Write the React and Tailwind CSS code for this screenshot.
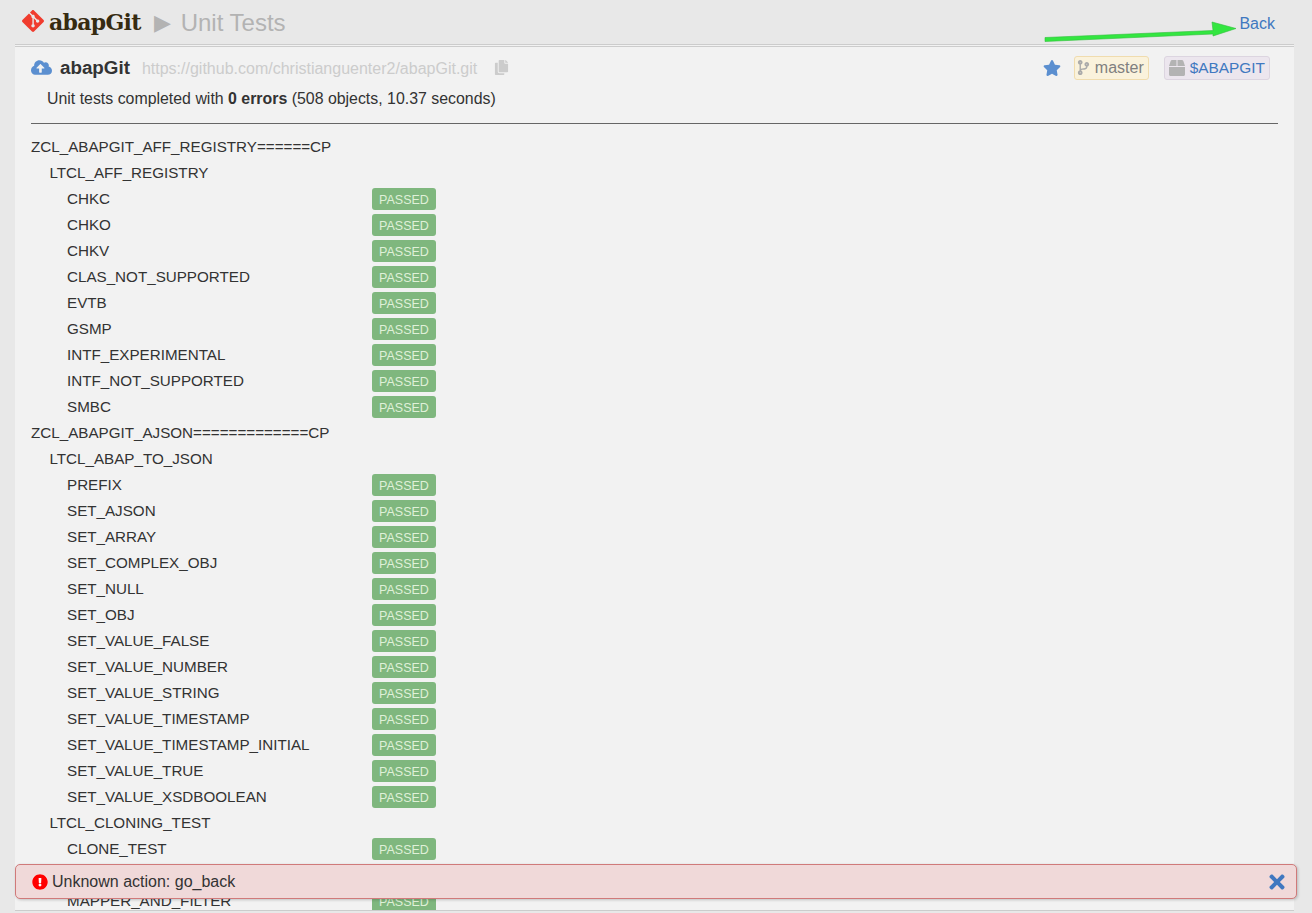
import React from 'react';
import { FaCloudUploadAlt, FaCopy, FaStar, FaCodeBranch, FaBox, FaTimes, FaExclamationCircle } from 'react-icons/fa';
import { SiGit } from 'react-icons/si';

const groups = [
  { name: 'ZCL_ABAPGIT_AFF_REGISTRY======CP', classes: [
    { name: 'LTCL_AFF_REGISTRY', tests: ['CHKC', 'CHKO', 'CHKV', 'CLAS_NOT_SUPPORTED', 'EVTB', 'GSMP', 'INTF_EXPERIMENTAL', 'INTF_NOT_SUPPORTED', 'SMBC'] },
  ] },
  { name: 'ZCL_ABAPGIT_AJSON=============CP', classes: [
    { name: 'LTCL_ABAP_TO_JSON', tests: ['PREFIX', 'SET_AJSON', 'SET_ARRAY', 'SET_COMPLEX_OBJ', 'SET_NULL', 'SET_OBJ', 'SET_VALUE_FALSE', 'SET_VALUE_NUMBER', 'SET_VALUE_STRING', 'SET_VALUE_TIMESTAMP', 'SET_VALUE_TIMESTAMP_INITIAL', 'SET_VALUE_TRUE', 'SET_VALUE_XSDBOOLEAN'] },
    { name: 'LTCL_CLONING_TEST', tests: ['CLONE_TEST', 'JSON_TO_JSON', 'MAPPER_AND_FILTER'] },
  ] },
];

function TestRow({ name }) {
  return (
    <div className="flex h-[26px] items-center pl-9 pt-[2px]">
      <span className="w-[305px] truncate">{name}</span>
      <span className="flex h-[22px] w-16 items-center justify-center rounded-[3px] bg-[#7fb77e] pt-[2px] text-[12.5px] text-[#dff0d8]">PASSED</span>
    </div>
  );
}

export default function App() {
  return (
    <div className="relative h-[913px] w-[1312px] overflow-hidden bg-[#e8e8e8] font-['Liberation_Sans',sans-serif] text-[15.2px] text-[#333]">
      {/* Title bar */}
      <header className="flex h-[44px] items-center justify-between pl-[22px] pr-[37px]">
        <div className="flex items-center">
          <SiGit size={22} className="mr-[5px] -translate-y-px text-[#f03c2e]" />
          <span className="font-['DejaVu_Serif',serif] text-[22px] font-bold tracking-[-0.7px] text-[#362b11]">abapGit</span>
          <span className="ml-[13px] text-[22px] text-[#b3b3b3]">▶</span>
          <span className="ml-[10px] mt-[2px] text-[24px] text-[#b3b3b3]">Unit Tests</span>
        </div>
        <a className="mt-1 text-[16px] text-[#4078c0]">Back</a>
      </header>

      <main className="ml-[15px] mr-[18px] h-[867px] overflow-hidden border-t-[3px] border-b border-double border-[#ccc] bg-[#f2f2f2] px-4">
        {/* Repo header */}
        <div className="flex h-[40px] items-center pt-[3px]">
          <FaCloudUploadAlt size={21} className="mr-[8px] -mt-[2px] text-[#5b8fd0]" />
          <span className="text-[18.8px] font-bold">abapGit</span>
          <span className="ml-[12px] text-[16px] text-[#ccc]">https://github.com/christianguenter2/abapGit.git</span>
          <FaCopy size={15} className="ml-[17px] -mt-[2px] text-[#ccc]" />
          <div className="ml-auto -mt-[2px] flex items-center text-[16px]">
            <FaStar size={18} className="mr-[13px] text-[#5b8fd0]" />
            <span className="flex h-6 items-center gap-[1px] rounded-[3px] border border-[#f0dcae] bg-[#faf2dc] px-1 text-[#808080]">
              <FaCodeBranch size={15} className="-ml-[3px] mr-[3px] text-[#aaa]" />
              master
            </span>
            <span className="ml-[15px] mr-2 flex h-6 items-center gap-[5px] rounded-[3px] border border-[#dcd5e0] bg-[#ece6ee] px-1 text-[15.4px] text-[#4078c0]">
              <FaBox size={16} className="text-[#b3b3b3]" />
              $ABAPGIT
            </span>
          </div>
        </div>
        <p className="mt-[2px] pl-4 text-[15.9px] leading-[20px]">
          Unit tests completed with <b>0 errors</b> (508 objects, 10.37 seconds)
        </p>
        <hr className="mt-[14px] mb-[9px] border-[#666]" />

        {/* Results */}
        {groups.map((group) => (
          <div key={group.name}>
            <div className="flex h-[26px] items-center pt-[2px]">{group.name}</div>
            {group.classes.map((cls) => (
              <div key={cls.name}>
                <div className="flex h-[26px] items-center pl-[18.5px] pt-[2px]">{cls.name}</div>
                {cls.tests.map((t) => <TestRow key={t} name={t} />)}
              </div>
            ))}
          </div>
        ))}
      </main>

      {/* Green annotation arrow */}
      <svg width="210" height="30" viewBox="0 0 210 30" className="absolute left-[1040px] top-[15px]">
        <path d="M5 22.5L173 15.5L172 7L196 13.5L173 21L173 19L5 26.5Z" fill="#33e640" stroke="#2fc03a" strokeWidth="0.6" />
      </svg>

      {/* Error toast */}
      <div className="absolute left-[15px] top-[864px] flex h-[35px] w-[1282px] items-center rounded-[5px] border border-[#d07a7a] bg-[#f0d9d9] pl-4 pr-2 text-[16px] shadow-[1px_1px_3px_rgba(0,0,0,0.2)]">
        <span className="mr-1 flex h-4 w-4 items-center justify-center rounded-full bg-white">
          <FaExclamationCircle size={16} className="text-[#f00]" />
        </span>
        <span>Unknown action: go_back</span>
        <FaTimes size={22} className="ml-auto text-[#4078c0]" />
      </div>
    </div>
  );
}
